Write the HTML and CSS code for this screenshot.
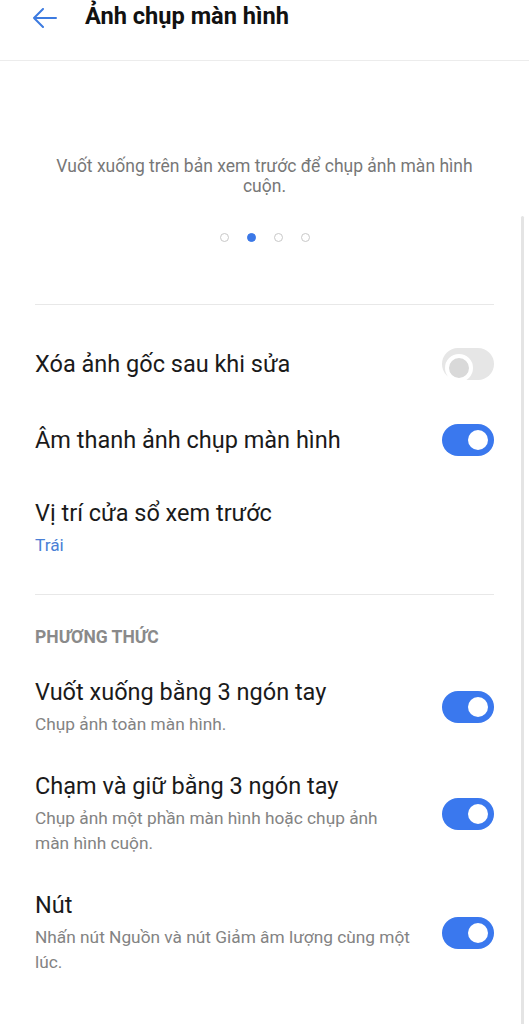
FILE: index.html
```html
<!DOCTYPE html>
<html lang="vi">
<head>
  <meta charset="UTF-8">
  <title>Ảnh chụp màn hình</title>
  <link rel="stylesheet" href="styles.css">
</head>
<body>
  <div class="screen">
    <div class="topbar">
      <svg class="back" width="26" height="20" viewBox="0 0 26 20">
        <path d="M2 10 H24 M11 1 L2 10 L11 19" fill="none" stroke="#3d7be0" stroke-width="2" stroke-linecap="round" stroke-linejoin="round"/>
      </svg>
      <h1 class="title">Ảnh chụp màn hình</h1>
    </div>

    <div class="preview">
      <p class="hint">Vuốt xuống trên bản xem trước để chụp ảnh màn hình cuộn.</p>
      <div class="dots">
        <span class="dot"></span>
        <span class="dot active"></span>
        <span class="dot"></span>
        <span class="dot"></span>
      </div>
    </div>

    <div class="divider"></div>

    <div class="group">
      <div class="row">
        <div class="text">
          <div class="label">Xóa ảnh gốc sau khi sửa</div>
        </div>
        <span class="switch off"></span>
      </div>
      <div class="row">
        <div class="text">
          <div class="label">Âm thanh ảnh chụp màn hình</div>
        </div>
        <span class="switch on"></span>
      </div>
      <div class="row">
        <div class="text">
          <div class="label">Vị trí cửa sổ xem trước</div>
          <div class="value">Trái</div>
        </div>
      </div>
    </div>

    <div class="divider"></div>

    <div class="group">
      <div class="group-title">PHƯƠNG THỨC</div>
      <div class="row row-desc">
        <div class="text">
          <div class="label">Vuốt xuống bằng 3 ngón tay</div>
          <div class="desc">Chụp ảnh toàn màn hình.</div>
        </div>
        <span class="switch on"></span>
      </div>
      <div class="row row-desc">
        <div class="text">
          <div class="label">Chạm và giữ bằng 3 ngón tay</div>
          <div class="desc">Chụp ảnh một phần màn hình hoặc chụp ảnh màn hình cuộn.</div>
        </div>
        <span class="switch on"></span>
      </div>
      <div class="row row-desc">
        <div class="text">
          <div class="label">Nút</div>
          <div class="desc">Nhấn nút Nguồn và nút Giảm âm lượng cùng một lúc.</div>
        </div>
        <span class="switch on"></span>
      </div>
    </div>

    <div class="scrollbar"></div>
  </div>
</body>
</html>
```

FILE: styles.css
```css
* {
  box-sizing: border-box;
}
body {
  margin: 0;
  background: #fff;
  font-family: Roboto, "Noto Sans", sans-serif;
  color: #1a1a1a;
}
.screen {
  position: relative;
  width: 529px;
  height: 1024px;
  overflow: hidden;
}

/* top bar */
.topbar {
  height: 61px;
  display: flex;
  align-items: flex-start;
  padding: 2px 0 0 32px;
  border-bottom: 1px solid #ececec;
}
.back {
  margin-top: 6px;
}
.title {
  margin: 0 0 0 27px;
  font-size: 23.6px;
  font-weight: 700;
  line-height: 28px;
  color: #111;
}

/* preview pager */
.preview {
  padding: 95px 46px 62px;
  text-align: center;
}
.hint {
  margin: 0;
  font-size: 17.5px;
  line-height: 20px;
  color: #777;
}
.dots {
  display: flex;
  justify-content: center;
  gap: 18px;
  margin-top: 37px;
}
.dot {
  width: 9px;
  height: 9px;
  border-radius: 50%;
  border: 1.5px solid #c8c8c8;
}
.dot.active {
  background: #3b78e7;
  border-color: #3b78e7;
}

.divider {
  height: 1px;
  margin: 0 35px;
  background: #e8e8e8;
}

/* settings list */
.group {
  padding: 21px 35px 16px;
}
.group-title {
  margin-top: 11px;
  margin-bottom: 13px;
  font-size: 17.5px;
  font-weight: 700;
  line-height: 20px;
  color: #8a8a8a;
}
.row {
  display: flex;
  align-items: center;
  padding: 20px 0;
}
.row-desc {
  padding: 17px 0;
}
.text {
  flex: 1;
  min-width: 0;
}
.label {
  font-size: 23.5px;
  line-height: 30px;
  color: #1a1a1a;
}
.value {
  margin-top: 5px;
  font-size: 17.3px;
  line-height: 25px;
  color: #4a80d6;
}
.desc {
  margin-top: 5px;
  padding-right: 30px;
  font-size: 17.3px;
  line-height: 25px;
  color: #838383;
}

/* toggles */
.switch {
  position: relative;
  flex: none;
  width: 52px;
  height: 32px;
  margin: 2px 0;
  border-radius: 16px;
}
.switch::after {
  content: "";
  position: absolute;
  top: 6px;
  width: 20px;
  height: 20px;
  border-radius: 50%;
}
.switch.on {
  background: #3a78ee;
}
.switch.on::after {
  right: 6px;
  background: #fff;
}
.switch.off {
  background: #e6e6e6;
}
.switch.off::after {
  left: 3px;
  background: #d9d9d9;
  border: 4px solid #fff;
}

.scrollbar {
  position: absolute;
  right: 5px;
  top: 216px;
  width: 3px;
  height: 820px;
  border-radius: 2px;
  background: #e4e4e4;
}
```
